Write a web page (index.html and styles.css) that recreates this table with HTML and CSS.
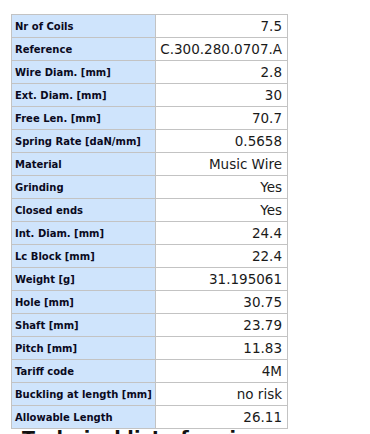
FILE: index.html
```html
<!DOCTYPE html>
<html>
<head>
<meta charset="utf-8">
<link rel="stylesheet" href="styles.css">
</head>
<body>
<div class="page">
<table class="specs">
<tr><th>Nr of Coils</th><td>7.5</td></tr>
<tr><th>Reference</th><td>C.300.280.0707.A</td></tr>
<tr><th>Wire Diam. [mm]</th><td>2.8</td></tr>
<tr><th>Ext. Diam. [mm]</th><td>30</td></tr>
<tr><th>Free Len. [mm]</th><td>70.7</td></tr>
<tr><th>Spring Rate [daN/mm]</th><td>0.5658</td></tr>
<tr><th>Material</th><td>Music Wire</td></tr>
<tr><th>Grinding</th><td>Yes</td></tr>
<tr><th>Closed ends</th><td>Yes</td></tr>
<tr><th>Int. Diam. [mm]</th><td>24.4</td></tr>
<tr><th>Lc Block [mm]</th><td>22.4</td></tr>
<tr><th>Weight [g]</th><td>31.195061</td></tr>
<tr><th>Hole [mm]</th><td>30.75</td></tr>
<tr><th>Shaft [mm]</th><td>23.79</td></tr>
<tr><th>Pitch [mm]</th><td>11.83</td></tr>
<tr><th>Tariff code</th><td>4M</td></tr>
<tr><th>Buckling at length [mm]</th><td>no risk</td></tr>
<tr><th>Allowable Length</th><td>26.11</td></tr>
</table>
<h2 class="next">Technical list of springs</h2>
</div>
</body>
</html>
```
FILE: styles.css
```css
html, body {
  margin: 0;
  padding: 0;
  background: #ffffff;
}
.page {
  padding: 14px 0 0 11px;
}
.specs {
  border-collapse: collapse;
  border: 1px solid #c3c3c3;
}
.specs th, .specs td {
  border: 1px solid #c3c3c3;
  height: 23px;
  padding: 0;
  box-sizing: border-box;
}
.specs th {
  width: 144px;
  background: #cfe4fc;
  text-align: left;
  padding-left: 3px;
  font-family: "DejaVu Sans", Verdana, sans-serif;
  font-weight: bold;
  font-size: 10px;
  color: #0a0a1e;
}
.specs td {
  width: 132px;
  text-align: right;
  padding-right: 5px;
  font-family: "DejaVu Sans", Verdana, sans-serif;
  font-size: 13.5px;
  color: #1a1a1a;
}
.next {
  margin: -2px 0 0 11px;
  font-family: "DejaVu Sans", Verdana, sans-serif;
  font-size: 19px;
  font-weight: bold;
  color: #111;
}
```
